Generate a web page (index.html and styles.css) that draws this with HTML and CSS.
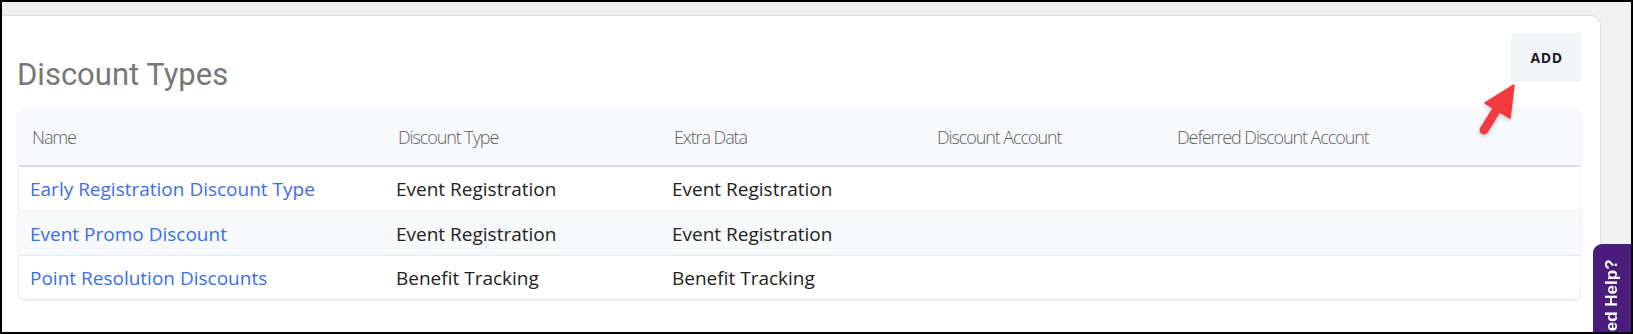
FILE: index.html
```html
<!DOCTYPE html>
<html lang="en">
<head>
    <meta charset="UTF-8" />
    <meta name="viewport" content="width=device-width, initial-scale=1" />
    <title>Discount Types</title>

    <link rel="stylesheet" href="styles.css">

</head>
<body>

  <div class="frame">

    <!-- Main card -->
    <div class="card">
        <div class="card-head">
            <h1 class="title">Discount Types</h1>
            <button class="add-btn">ADD</button>
        </div>

        <!-- Pointer arrow to the ADD button -->
        <svg class="pointer" width="50" height="60" viewBox="0 0 50 60">
          <line x1="23" y1="30" x2="10" y2="51" stroke="#f23a3e" stroke-width="9" stroke-linecap="round"/>
          <polygon points="40,6 11,24 36,39" fill="#f23a3e" stroke="#f23a3e" stroke-width="1.5" stroke-linejoin="round"/>
        </svg>

        <div class="table-box">
            <table class="grid">
                <thead>
                    <tr>
                        <th class="c-name">Name</th>
                        <th class="c-type">Discount Type</th>
                        <th class="c-extra">Extra Data</th>
                        <th class="c-acct">Discount Account</th>
                        <th class="c-def">Deferred Discount Account</th>
                    </tr>
                </thead>
                <tbody>
                    <tr>
                        <td><a href="#">Early Registration Discount Type</a></td>
                        <td>Event Registration</td>
                        <td>Event Registration</td>
                        <td></td>
                        <td></td>
                    </tr>
                    <tr>
                        <td><a href="#">Event Promo Discount</a></td>
                        <td>Event Registration</td>
                        <td>Event Registration</td>
                        <td></td>
                        <td></td>
                    </tr>
                    <tr>
                        <td><a href="#">Point Resolution Discounts</a></td>
                        <td>Benefit Tracking</td>
                        <td>Benefit Tracking</td>
                        <td></td>
                        <td></td>
                    </tr>
                </tbody>
            </table>
        </div>
    </div>

    <!-- Help tab -->
    <div class="help-tab"><span>Need Help?</span></div>

  </div>

</body>
</html>
```

FILE: styles.css
```css
body {
  margin: 0;
  padding: 0;
  font-family: 'Open Sans', 'Liberation Sans', sans-serif;
  background: #f1f1f1;
}

.frame {
  position: relative;
  width: 1633px;
  height: 334px;
  box-sizing: border-box;
  border: 2px solid #000;
  background: #f1f1f1;
  padding: 13px 30px 0 0;
  overflow: hidden;
}

/* Carte principale */
.card {
  position: relative;
  background: #fff;
  border: 1px solid #dedede;
  border-left: none;
  border-radius: 0 10px 0 0;
  padding: 17px 20px 20px 17px;
  height: 400px;
}
.card-head {
  display: flex;
  justify-content: space-between;
  align-items: flex-start;
}
.title {
  margin: 22px 0 0 -2px;
  font-family: Roboto, 'Liberation Sans', sans-serif;
  font-weight: 400;
  font-size: 31px;
  line-height: 40px;
  color: #777;
}
.add-btn {
  margin-right: -2px;
  width: 71px;
  height: 49px;
  border: none;
  border-radius: 3px;
  background: #f3f6f9;
  font-family: 'Open Sans', 'Liberation Sans', sans-serif;
  font-weight: 700;
  font-size: 14px;
  letter-spacing: 0.6px;
  color: #1b1b2a;
  cursor: pointer;
}

.pointer {
  position: absolute;
  left: 1472px;
  top: 63px;
  filter: drop-shadow(0 2px 2px rgba(0,0,0,0.18));
}

/* Tableau */
.table-box {
  margin-top: 13px;
  border-radius: 6px;
  overflow: hidden;
  box-shadow: 0 1px 3px rgba(0,0,0,0.16);
}
.grid {
  width: 100%;
  border-collapse: collapse;
  table-layout: fixed;
}
.grid th {
  box-sizing: border-box;
  height: 58px;
  padding: 0 13px;
  text-align: left;
  font-weight: 300;
  font-size: 18px;
  letter-spacing: -1.1px;
  color: #5f5f5f;
  background: #f7f9fc;
  border-bottom: 2px solid #dcdcdc;
}
.c-name { width: 366px; }
.c-type { width: 276px; }
.c-extra { width: 263px; }
.c-acct { width: 240px; }

.grid td {
  height: 43px;
  padding: 0 11px;
  font-size: 19px;
  color: #222;
  border-top: 1px solid #e8ebef;
  white-space: nowrap;
}
.grid tbody tr:first-child td {
  border-top: none;
  height: 44px;
}
.grid tbody tr:nth-child(even) td {
  background: #f7f9fc;
}
.grid a {
  color: #3c6ee8;
  text-decoration: none;
}

/* Bouton d'aide */
.help-tab {
  position: absolute;
  right: 0;
  top: 242px;
  width: 38px;
  height: 120px;
  background: #4a1d7d;
  border-radius: 9px 0 0 0;
  display: flex;
  justify-content: center;
  padding-top: 9px;
  box-sizing: border-box;
}
.help-tab span {
  writing-mode: vertical-rl;
  transform: rotate(180deg);
  font-family: 'Liberation Sans', Arial, sans-serif;
  font-weight: 700;
  font-size: 17px;
  color: #fff;
  white-space: nowrap;
  height: 100px;
  text-align: left;
}
```
